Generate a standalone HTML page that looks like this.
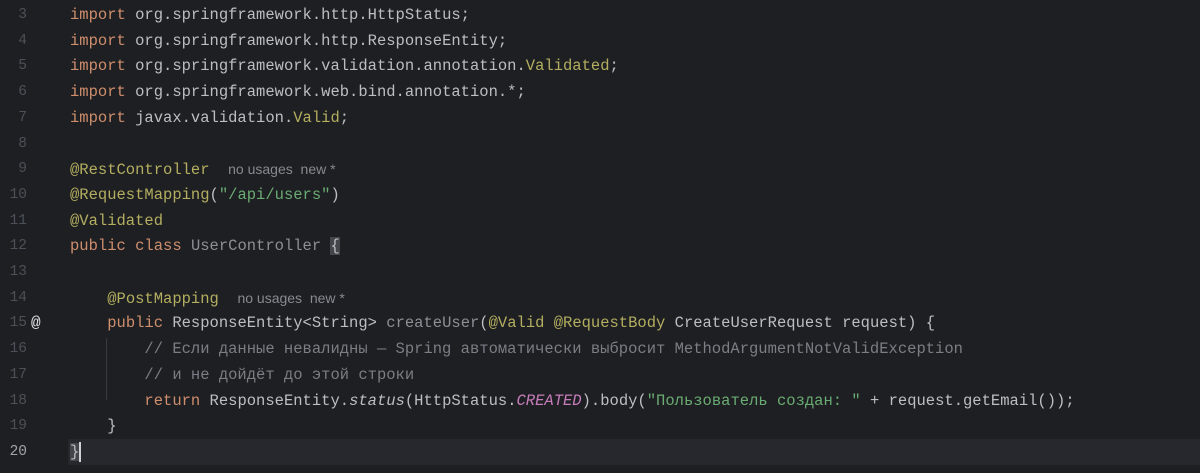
<!DOCTYPE html><html><head><meta charset="utf-8"><style>
body{margin:0;width:1200px;height:473px;background:#1e1f22;overflow:hidden;position:relative;font-family:"Liberation Mono","DejaVu Sans Mono",monospace;font-size:15.5px;color:#bcbec4}
.l{position:absolute;left:0;width:1200px;height:26px;line-height:26px;white-space:pre}
.n{position:absolute;left:0;width:27px;text-align:right;color:#4b5059;font-size:14.5px}
.c{position:absolute;left:70px}
.k{color:#cf8e6d}.a{color:#b3ae60}.s{color:#6aab73}.m{color:#7a7e85}.f{color:#8c8f96}.i{font-style:italic}.p{color:#c77dbb;font-style:italic}
.h{font-family:"Liberation Sans",sans-serif;font-size:14px;color:#868a91}
.cur{background:#26282e}
.g{position:absolute;left:106px;width:1px;background:#393b40}
</style></head><body>
<div class="g" style="top:338px;height:62px"></div>
<div class="l" style="top:2px"><span class="n">3</span><span class="c"><span class="k">import</span> org.springframework.http.HttpStatus;</span></div>
<div class="l" style="top:27.7px"><span class="n">4</span><span class="c"><span class="k">import</span> org.springframework.http.ResponseEntity;</span></div>
<div class="l" style="top:53.4px"><span class="n">5</span><span class="c"><span class="k">import</span> org.springframework.validation.annotation.<span class="a">Validated</span>;</span></div>
<div class="l" style="top:79.1px"><span class="n">6</span><span class="c"><span class="k">import</span> org.springframework.web.bind.annotation.*;</span></div>
<div class="l" style="top:104.8px"><span class="n">7</span><span class="c"><span class="k">import</span> javax.validation.<span class="a">Valid</span>;</span></div>
<div class="l" style="top:130.5px"><span class="n">8</span></div>
<div class="l" style="top:156.2px"><span class="n">9</span><span class="c"><span class="a">@RestController</span>  <span class="h">no usages &nbsp;new *</span></span></div>
<div class="l" style="top:181.9px"><span class="n">10</span><span class="c"><span class="a">@RequestMapping</span>(<span class="s">"/api/users"</span>)</span></div>
<div class="l" style="top:207.6px"><span class="n">11</span><span class="c"><span class="a">@Validated</span></span></div>
<div class="l" style="top:233.3px"><span class="n">12</span><span class="c"><span class="k">public class</span> <span class="f">UserController</span> <span style="background:#43454a">{</span></span></div>
<div class="l" style="top:259px"><span class="n">13</span></div>
<div class="l" style="top:284.7px"><span class="n">14</span><span class="c">    <span class="a">@PostMapping</span>  <span class="h">no usages &nbsp;new *</span></span></div>
<div class="l" style="top:310.4px"><span class="n">15</span><span style="position:absolute;left:31px;color:#dfe1e5;font-size:16px">@</span><span class="c">    <span class="k">public</span> ResponseEntity&lt;String&gt; <span class="f">createUser</span>(<span class="a">@Valid @RequestBody</span> CreateUserRequest request) {</span></div>
<div class="l" style="top:336.1px"><span class="n">16</span><span class="c m">        // Если данные невалидны — Spring автоматически выбросит MethodArgumentNotValidException</span></div>
<div class="l" style="top:361.8px"><span class="n">17</span><span class="c m">        // и не дойдёт до этой строки</span></div>
<div class="l" style="top:387.5px"><span class="n">18</span><span class="c">        <span class="k">return</span> ResponseEntity.<span class="i">status</span>(HttpStatus.<span class="p">CREATED</span>).body(<span class="s">"Пользователь создан: "</span> + request.getEmail());</span></div>
<div class="l" style="top:413.2px"><span class="n">19</span><span class="c">    }</span></div>
<div class="l cur" style="top:439px;left:68px;width:1132px"></div>
<div class="l" style="top:439px"><span class="n" style="color:#a1a3ab">20</span><span class="c"><span style="background:#43454a">}</span><span style="display:inline-block;width:2px;height:20px;background:#ced0d6;vertical-align:middle"></span></span></div>
</body></html>
